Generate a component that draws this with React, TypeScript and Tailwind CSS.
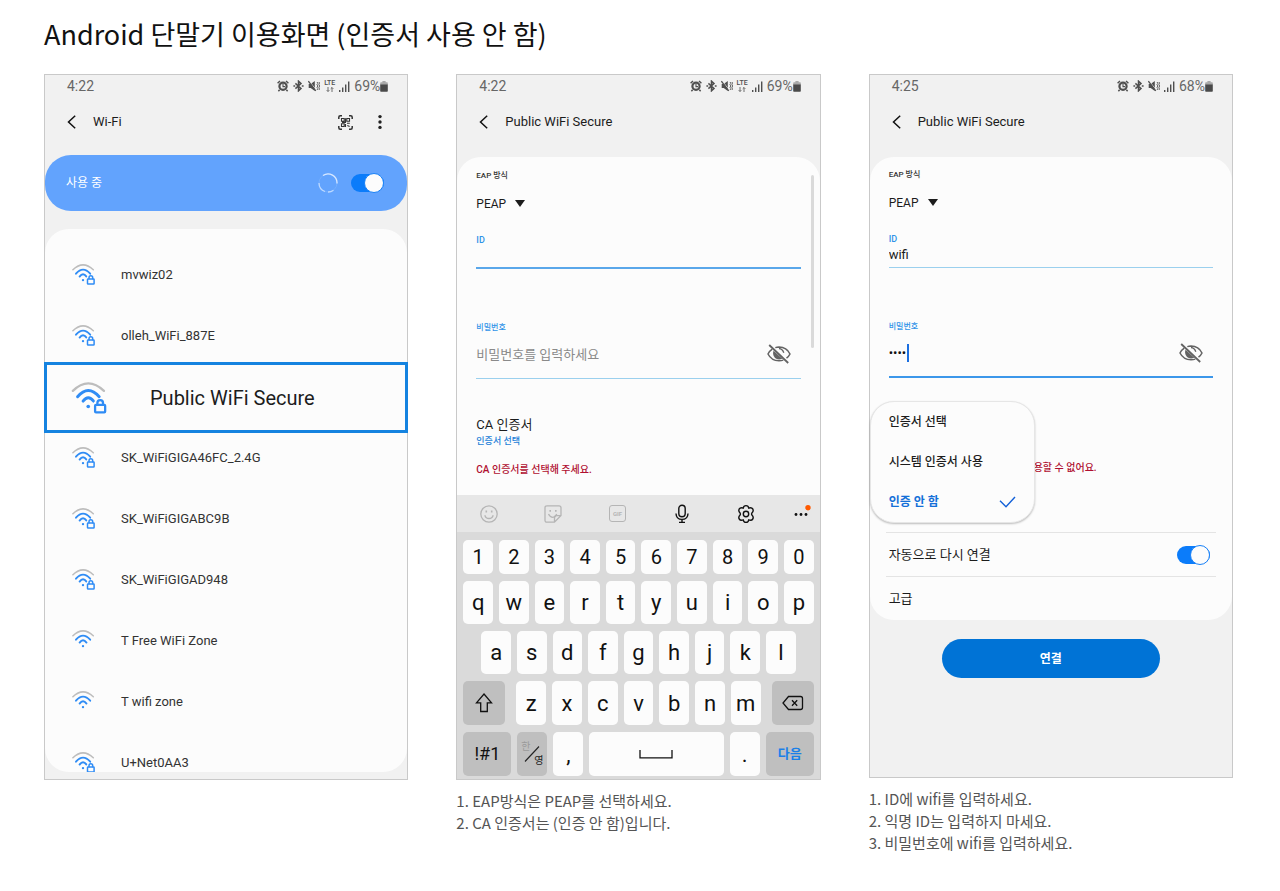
import { ReactNode } from "react";
import clsx from "clsx";

const networks = [
    { name: "mvwiz02", locked: true },
    { name: "olleh_WiFi_887E", locked: true },
    { name: "Public WiFi Secure", locked: true, highlighted: true },
    { name: "SK_WiFiGIGA46FC_2.4G", locked: true },
    { name: "SK_WiFiGIGABC9B", locked: true },
    { name: "SK_WiFiGIGAD948", locked: true },
    { name: "T Free WiFi Zone", locked: false },
    { name: "T wifi zone", locked: false },
];

function WifiIcon({ locked, className }: { locked: boolean; className: string }) {
    return (
        <svg viewBox="0 0 23 21" fill="none" strokeLinecap="round" className={className} aria-hidden="true">
            <path d="M.9 5.8Q11 -4 21.3 5.8" stroke="#bdbdbd" strokeWidth="1.5" />
            <path d="M4 9.7Q11 1.5 18.2 9.7" stroke="#2f8cf5" strokeWidth="1.9" />
            <path d="M7.6 12.6Q11 8 14.5 12.6" stroke="#2f8cf5" strokeWidth="1.9" />
            <circle cx="11" cy="16.1" r="1.2" fill="#2f8cf5" />
            {locked && (
                <>
                    <path d="M14.4 20.6v-6.2q.8-3 4.400-3.400 3.400.4 4 3.400v6.200z" fill="#fcfcfc" />
                    <rect x="15.500" y="15" width="6.600" height="5" rx=".6" stroke="#2f8cf5" strokeWidth="1.500" />
                    <path d="M17 14.800v-1.100a1.850 1.850 0 0 1 3.700 0v1.100" stroke="#2f8cf5" strokeWidth="1.500" />
                </>
            )}
        </svg>
    );
}

function AlarmIcon() {
    return (
        <svg viewBox="0 0 12 12" fill="none" stroke="currentColor" className="h-3 w-3" aria-hidden="true">
            <circle cx="6" cy="6.3" r="3.6" strokeWidth="2.2" />
            <path d="M6 4v2.600h2" strokeWidth="1.100" />
            <path d="M.6 3.2 3 1M11.4 3.2 9 1M2.6 9.8l-1.200 1.400M9.400 9.800l1.200 1.400" strokeWidth="1.500" />
        </svg>
    );
}

function BluetoothIcon() {
    return (
        <svg viewBox="0 0 11 12" fill="none" stroke="currentColor" strokeWidth="1.500" className="h-3 w-[11px]" aria-hidden="true">
            <path d="m2.400 3.400 5.600 5-2.500 2.400V1.200L8 3.600l-5.600 5" />
            <path d="M.4 6h1.800M8.800 6h1.800" strokeWidth="1.600" />
        </svg>
    );
}

function MuteVibrateIcon() {
    return (
        <svg viewBox="0 0 12 12" className="h-3 w-3" fill="none" stroke="currentColor" aria-hidden="true">
            <path d="M.7 4h2L6.800 1v10L2.700 8h-2z" fill="currentColor" stroke="none" />
            <path d="m1.400 1.200 6.600 8.600" stroke="#f1f1f1" strokeWidth=".9" />
            <path d="m.4 1.200 7.400 9.600" strokeWidth="1.200" />
            <path d="m9 2 .9 1.300L9 4.600 9.900 6 9 7.300l.9 1.300L9 10M10.900 2l.8 1.300-.8 1.300.8 1.400-.8 1.300.8 1.300-.8 1.400" strokeWidth=".9" />
        </svg>
    );
}

function SignalIcon() {
    return (
        <svg viewBox="0 0 11 11" fill="currentColor" className="h-[11px] w-[11px]" aria-hidden="true">
            <path d="M0 9h1.400v2H0zM3 6.500h1.400V11H3zM6 3.400h1.400V11H6zM9 .6h1.400V11H9z" />
        </svg>
    );
}

function BatteryIcon() {
    return (
        <svg viewBox="0 0 8 11" className="h-[11px] w-2" aria-hidden="true">
            <path d="M2.400 0h3.200v1.300H7q.8 0 .8.8V4H.2V2.100q0-.8.8-.8h1.400z" fill="#a9a9a9" />
            <path d="M.2 3.600h7.600v6.300q0 .8-.8.8H1q-.8 0-.8-.8z" fill="#4a4a4a" />
        </svg>
    );
}

function StatusBar({ time, battery, lte }: { time: string; battery: string; lte?: boolean }) {
    return (
        <div className="flex h-6 items-center justify-between pr-[19px] pb-[2px] pl-[22px] text-sm text-[#666]">
            <span>{time}</span>
            <div className="flex items-center gap-1 text-[#4f4f4f]">
                <AlarmIcon />
                <BluetoothIcon />
                <MuteVibrateIcon />
                {lte && (
                    <span className="flex flex-col items-center text-[7px] leading-[7px] font-medium">
                        LTE
                        <svg viewBox="0 0 8 5" className="h-[5px] w-2" stroke="currentColor" strokeWidth=".8" fill="none" aria-hidden="true">
                            <path d="M2 0v4.400M.7 3.200 2 4.500l1.300-1.300M6 5V.6M4.700 1.800 6 .5l1.300 1.300" />
                        </svg>
                    </span>
                )}
                <SignalIcon />
                <span className="flex items-center text-[#666]">
                    {battery}
                    <BatteryIcon />
                </span>
            </div>
        </div>
    );
}

function PhoneHeader({ title, children }: { title: string; children?: ReactNode }) {
    return (
        <header className="flex h-[46px] items-center pr-[22px] pl-[22px]">
            <button type="button" aria-label="뒤로" className="mr-[17px] flex">
                <svg viewBox="0 0 9 14" fill="none" stroke="#111" strokeWidth="1.500" className="h-[14px] w-[9px]">
                    <path d="M8.200.8 1.500 7l6.700 6.200" />
                </svg>
            </button>
            <h2 className="flex-1 text-[13px] text-[#1c1c1c]">{title}</h2>
            {children}
        </header>
    );
}

function Phone({ children }: { children: ReactNode }) {
    return (
        <div className="border border-[#c9c9c9] bg-[#f1f1f1] font-['Roboto','Noto_Sans_CJK_KR',sans-serif]">
            {children}
        </div>
    );
}

function Toggle({ id }: { id: string }) {
    return (
        <input
            id={id}
            type="checkbox"
            role="switch"
            defaultChecked
            className="flex h-[18px] w-[33px] shrink-0 appearance-none items-center justify-end rounded-full bg-[#0b7cfa] before:h-5 before:w-5 before:shrink-0 before:rounded-full before:border before:border-[#1a82f7] before:bg-[#fcfcfc] before:content-['']"
        />
    );
}

function EapSelect({ id }: { id: string }) {
    return (
        <>
            <label htmlFor={id} className="block text-[8px] leading-3 font-medium text-[#333]">
                EAP 방식
            </label>
            <div className="relative mt-3 w-[49px]">
                <select id={id} className="block h-5 w-full appearance-none bg-transparent text-xs text-[#1c1c1c]">
                    <option>PEAP</option>
                </select>
                <svg viewBox="0 0 10 7" className="pointer-events-none absolute top-[6px] right-0 h-[7px] w-[10px]" fill="#1c1c1c" aria-hidden="true">
                    <path d="M0 0h10L5 7z" />
                </svg>
            </div>
        </>
    );
}

function EyeOffButton() {
    return (
        <button type="button" aria-label="비밀번호 표시" className="mr-[10px] ml-auto flex">
            <svg viewBox="0 0 24 20" fill="none" stroke="#636363" className="h-5 w-6">
                <path d="M5.200 5.200Q2.200 7.300 1 10q3.300 6.600 11 6.800 2.400 0 4.300-.7" strokeWidth="1.500" />
                <path d="M8.300 3.600Q10 3.100 12 3.100q7.800.2 11 6.900-1.200 2.500-3.500 4.200" strokeWidth="1.500" />
                <path d="M6.600 6.700q-.7 1.500-.5 3.400Q7 15.400 12 15.500q1.700 0 3.300-.7z" fill="#636363" stroke="none" />
                <path d="M12 4.500q3.500.4 4.800 4.200" strokeWidth="1.300" />
                <path d="m2.200 1 19 18" strokeWidth="1.800" />
            </svg>
        </button>
    );
}

function WifiListPhone() {
    return (
        <Phone>
            <StatusBar time="4:22" battery="69%" lte />
            <PhoneHeader title="Wi-Fi">
                <button type="button" aria-label="QR 코드 스캔" className="flex">
                    <svg viewBox="0 0 15 15" fill="none" stroke="#333" className="h-[15px] w-[15px]">
                        <path d="M.8 4V2.300Q.8.8 2.300.8H4M11 .8h1.700q1.500 0 1.500 1.500V4M14.200 11v1.700q0 1.500-1.500 1.500H11M4 14.200H2.300q-1.500 0-1.500-1.500V11" strokeWidth="1.500" />
                        <path d="M3.500 3.500h2.700v2.700H3.500zM8.800 3.500h2.700v2.700H8.800zM3.500 8.800h2.700v2.700H3.500zM7.500 3.200v4.200H4M7.500 9v3M9 8.200h2.800M9.300 10.500l2.300 1" strokeWidth="1.100" />
                    </svg>
                </button>
                <button type="button" aria-label="더보기" className="ml-[22px] flex">
                    <svg viewBox="0 0 10 16" fill="#222" className="h-4 w-[10px]">
                        <circle cx="5" cy="2.600" r="1.700" />
                        <circle cx="5" cy="8" r="1.700" />
                        <circle cx="5" cy="13.400" r="1.700" />
                    </svg>
                </button>
            </PhoneHeader>
            <div className="mt-[10px] flex h-14 items-center rounded-[26px] bg-[#62a3fd] pr-[23px] pl-[21px]">
                <label htmlFor="wifi-on" className="flex-1 text-xs text-white">
                    사용 중
                </label>
                <svg viewBox="0 0 20 20" fill="none" className="mr-[13px] h-5 w-5" aria-hidden="true">
                    <circle cx="10" cy="10" r="9" stroke="#73aefd" strokeWidth="1" />
                    <path d="M5 2.500A9 9 0 0 1 19 10.500" stroke="#d8e8ff" strokeWidth="1.300" />
                    <path d="M15.500 17.200A9 9 0 0 1 10 19M7 18.500A9 9 0 0 1 1 10" stroke="#bdd9ff" strokeWidth="1.300" />
                </svg>
                <Toggle id="wifi-on" />
            </div>
            <ul className="mt-[18px] mb-[7px] rounded-[24px] bg-[#fcfcfc] pt-[15px]">
                {networks.map((network) => (
                    <li
                        key={network.name}
                        className={clsx(
                            network.highlighted
                                ? "relative -mx-px -mt-1 -mb-[6px] h-[71px] border-3 border-[#1583e0] bg-[#fcfcfc]"
                                : "h-[61px]"
                        )}
                    >
                        <button
                            type="button"
                            className={clsx(
                                "flex h-full w-full items-center text-left",
                                network.highlighted
                                    ? "gap-[43px] pl-6 text-xl text-[#1c1c1c]"
                                    : "gap-[26px] pl-[27px] text-[13px] text-[#333]"
                            )}
                        >
                            <WifiIcon
                                locked={network.locked}
                                className={network.highlighted ? "h-8 w-9" : "h-[21px] w-[23px]"}
                            />
                            {network.name}
                        </button>
                    </li>
                ))}
                {/* last row is cut off by the bottom of the list */}
                <li className="h-10 overflow-hidden">
                    <button type="button" className="flex h-[61px] w-full items-center gap-[26px] pl-[27px] text-left text-[13px] text-[#333]">
                        <WifiIcon locked className="h-[21px] w-[23px]" />
                        U+Net0AA3
                    </button>
                </li>
            </ul>
        </Phone>
    );
}

function Key({ children, dark, label, className }: { children: ReactNode; dark?: boolean; label?: string; className?: string }) {
    return (
        <button
            type="button"
            aria-label={label}
            className={clsx(
                "flex items-center justify-center rounded-[5px] text-[#111]",
                dark ? "bg-[#bfbfbf]" : "bg-[#fcfcfc]",
                className
            )}
        >
            {children}
        </button>
    );
}

function KeyRow({ keys, className }: { keys: string; className: string }) {
    return (
        <div className={clsx("grid auto-cols-fr grid-flow-col gap-[6px]", className)}>
            {keys.split("").map((key) => (
                <Key key={key}>{key}</Key>
            ))}
        </div>
    );
}

function Keyboard() {
    return (
        <div className="bg-[#dadada]">
            <div className="grid h-[37px] grid-cols-[repeat(5,1fr)_42px] items-center justify-items-center bg-[#e7e7e7] text-[#b5b5b5]">
                <button type="button" aria-label="이모티콘">
                    <svg viewBox="0 0 18 18" fill="none" stroke="currentColor" strokeWidth="1.300" className="h-[18px] w-[18px]">
                        <circle cx="9" cy="9" r="8.200" />
                        <path d="M4.800 10.200q1 3.300 4.200 3.300t4.200-3.300" />
                        <path d="M6.300 5.500v2M11.700 5.500v2" strokeWidth="1.600" />
                    </svg>
                </button>
                <button type="button" aria-label="스티커">
                    <svg viewBox="0 0 18 18" fill="none" stroke="currentColor" strokeWidth="1.300" className="h-[18px] w-[18px]">
                        <path d="M3 .8h12q2 0 2 2v7.700l-6.500 6.700H3q-2 0-2-2V2.800q0-2 2-2zM10.500 17v-4q0-2.200 2.200-2.300H17" />
                        <path d="M4.500 9q1.500 3.300 4.500 3.300 2-.2 3.800-3.100" />
                        <path d="M6.200 5v1.800M11.800 5v1.800" strokeWidth="1.600" />
                    </svg>
                </button>
                <button type="button" aria-label="GIF" className="flex h-[17px] w-[17px] items-center justify-center rounded-[3px] border border-[#b5b5b5] text-[6px] leading-none font-bold">
                    GIF
                </button>
                <button type="button" aria-label="음성 입력">
                    <svg viewBox="0 0 16 20" fill="none" stroke="#111" strokeWidth="1.400" className="h-5 w-4">
                        <rect x="4.800" y="1.200" width="6.400" height="11.600" rx="3.200" />
                        <path d="M2 9.500q.2 5.900 6 5.900t6-5.900M8 15.400v3M5 18.400h6" />
                    </svg>
                </button>
                <button type="button" aria-label="설정">
                    <svg viewBox="0 0 20 20" fill="none" stroke="#111" strokeWidth="1.400" className="h-5 w-5">
                        <path d="M10 1.600c2 0 2.500.7 2.800 2.500 1.800-.6 2.900-.8 4 .9 1 1.800.5 2.600-.9 4q-.6 1 0 2c1.400 1.400 1.900 2.200.9 4-1.100 1.700-2.200 1.500-4 .9-.3 1.800-.8 2.500-2.800 2.500s-2.500-.7-2.800-2.500c-1.800.6-2.900.8-4-.9-1-1.800-.5-2.600.9-4q.6-1 0-2c-1.400-1.400-1.900-2.200-.9-4 1.100-1.700 2.200-1.500 4-.9.3-1.800.8-2.500 2.800-2.500z" />
                        <circle cx="10" cy="10" r="2.700" />
                    </svg>
                </button>
                <button type="button" aria-label="더보기" className="justify-self-end pr-2">
                    <svg viewBox="0 0 18 18" fill="#111" className="h-[18px] w-[18px]">
                        <circle cx="2" cy="9.500" r="1.400" />
                        <circle cx="7" cy="9.500" r="1.400" />
                        <circle cx="12" cy="9.500" r="1.400" />
                        <circle cx="14" cy="2.700" r="2.700" fill="#ff5a00" />
                    </svg>
                </button>
            </div>
            <div className="flex flex-col gap-[7px] px-[6px] pt-2 pb-[3px] text-[22px]">
                <KeyRow keys="1234567890" className="h-[34px] text-xl" />
                <KeyRow keys="qwertyuiop" className="h-[43px]" />
                <KeyRow keys="asdfghjkl" className="h-[43px] px-[18px]" />
                <div className="grid h-11 grid-cols-[42px_1fr_42px] gap-x-[11px]">
                    <Key dark label="Shift">
                        <svg viewBox="0 0 18 20" fill="none" stroke="#111" strokeWidth="1.300" className="h-5 w-[18px]">
                            <path d="m9 1 7.500 8.800h-4.200v8.700H5.700V9.800H1.500z" />
                        </svg>
                    </Key>
                    <KeyRow keys="zxcvbnm" className="h-11" />
                    <Key dark label="지우기">
                        <svg viewBox="0 0 22 16" fill="none" stroke="#111" strokeWidth="1.300" className="h-4 w-[22px]">
                            <path d="M6.500 1.500h12q2 0 2 2v9q0 2-2 2h-12L1 8z" />
                            <path d="m10 5.300 5.200 5.400M15.200 5.300 10 10.700" />
                        </svg>
                    </Key>
                </div>
                <div className="grid h-11 grid-cols-[48px_30px_30px_1fr_30px_48px] gap-x-[6px]">
                    <Key dark className="text-lg">!#1</Key>
                    <Key dark label="한/영">
                        <span className="grid grid-cols-2 gap-x-1 text-[10px] leading-[14px]">
                            <span className="col-start-1 row-start-1 text-[#9a9a9a]">한</span>
                            <svg viewBox="0 0 16 18" fill="none" stroke="#222" className="col-start-1 col-end-3 row-start-1 row-end-3 h-[18px] w-4 place-self-center" aria-hidden="true">
                                <path d="M15 1.500 1 16.500" strokeWidth="1.100" />
                            </svg>
                            <span className="col-start-2 row-start-2 text-[#222]">영</span>
                        </span>
                    </Key>
                    <Key>,</Key>
                    <Key label="스페이스">
                        <svg viewBox="0 0 34 9" fill="none" stroke="#111" strokeWidth="1.300" className="h-[9px] w-[34px]">
                            <path d="M1 0v7.800h32V0" />
                        </svg>
                    </Key>
                    <Key>.</Key>
                    <Key dark className="text-[13px] font-bold">
                        <span className="text-[#1b7fe8]">다음</span>
                    </Key>
                </div>
            </div>
        </div>
    );
}

function KeyboardPhone() {
    return (
        <Phone>
            <StatusBar time="4:22" battery="69%" lte />
            <PhoneHeader title="Public WiFi Secure" />
            <form className="relative mt-3 rounded-t-[24px] bg-[#fcfcfc] px-[19px] pt-[13px] pb-[17px]">
                <div className="absolute top-[18px] right-[6px] h-[173px] w-[3px] rounded-full bg-[#dadada]" />
                <EapSelect id="eap-1" />
                <label htmlFor="id-1" className="mt-5 block text-[9px] leading-3 font-medium text-[#2f93e8]">
                    ID
                </label>
                <input id="id-1" type="text" className="block h-[23px] w-full border-b-2 border-[#5aa7ea] bg-transparent pb-1 text-[13px] outline-none" />
                <label htmlFor="pw-1" className="mt-[53px] block text-[8px] leading-3 font-medium text-[#2f93e8]">
                    비밀번호
                </label>
                <div className="flex h-[45px] items-center border-b border-[#9bd0ee] pb-1">
                    <input
                        id="pw-1"
                        type="password"
                        placeholder="비밀번호를 입력하세요"
                        className="h-5 min-w-0 flex-1 bg-transparent text-[13px] outline-none placeholder:text-[#8a8a8a]"
                    />
                    <EyeOffButton />
                </div>
                <p className="mt-9 text-[13px] leading-5 text-[#1c1c1c]">CA 인증서</p>
                <button type="button" className="block text-[9px] leading-3 font-medium text-[#1b7fd8]">
                    인증서 선택
                </button>
                <p className="mt-[15px] text-[10px] leading-4 font-medium text-[#b00f30]">CA 인증서를 선택해 주세요.</p>
            </form>
            <Keyboard />
        </Phone>
    );
}

function CertificatePhone() {
    return (
        <Phone>
            <StatusBar time="4:25" battery="68%" />
            <PhoneHeader title="Public WiFi Secure" />
            <form className="pb-[99px]">
                <div className="mt-3 rounded-[24px] bg-[#fcfcfc] pt-3">
                    <div className="px-[19px]">
                        <EapSelect id="eap-2" />
                        <label htmlFor="id-2" className="mt-5 block text-[9px] leading-3 font-medium text-[#2f93e8]">
                            ID
                        </label>
                        <input
                            id="id-2"
                            type="text"
                            defaultValue="wifi"
                            className="block h-[23px] w-full border-b border-[#9bd0ee] bg-transparent pb-1 text-[13px] text-[#1c1c1c] outline-none"
                        />
                        <label htmlFor="pw-2" className="mt-[53px] block text-[8px] leading-3 font-medium text-[#2f93e8]">
                            비밀번호
                        </label>
                        <div className="flex h-[45px] items-center border-b-2 border-[#3c97ea] pb-1">
                            <input
                                id="pw-2"
                                type="password"
                                defaultValue="wifi"
                                className="h-5 w-[18px] bg-transparent text-[13px] text-[#111] outline-none"
                            />
                            <span className="h-[18px] w-[2px] bg-[#1b6fe0]" />
                            <EyeOffButton />
                        </div>
                    </div>
                    <div className="relative pt-[82px] pb-14">
                        <p className="pl-[164px] text-[10px] leading-4 font-medium text-[#b00f30]">용할 수 없어요.</p>
                        <div
                            role="listbox"
                            aria-label="CA 인증서"
                            className="absolute top-[23px] left-0 w-[165px] rounded-[24px] border border-[#e6e6e6] bg-[#fcfcfc] text-xs font-medium text-[#1c1c1c] shadow-[0_1px_2px_rgba(0,0,0,0.25)]"
                        >
                            <button type="button" role="option" aria-selected="false" className="flex h-10 w-full items-center px-[18px]">
                                인증서 선택
                            </button>
                            <button type="button" role="option" aria-selected="false" className="flex h-10 w-full items-center px-[18px]">
                                시스템 인증서 사용
                            </button>
                            <button type="button" role="option" aria-selected="true" className="flex h-10 w-full items-center justify-between px-[18px] font-bold text-[#1470d8]">
                                인증 안 함
                                <svg viewBox="0 0 17 12" fill="none" stroke="#1260d8" strokeWidth="1.400" className="h-3 w-[17px]" aria-hidden="true">
                                    <path d="m1 4.800 6 6L16 1" />
                                </svg>
                            </button>
                        </div>
                    </div>
                    <div className="mx-4 flex h-11 items-center justify-between border-t border-[#e4e4e4] pr-[6px] pl-[3px]">
                        <label htmlFor="reconnect" className="text-[13px] text-[#1c1c1c]">
                            자동으로 다시 연결
                        </label>
                        <Toggle id="reconnect" />
                    </div>
                    <div className="mx-4 border-t border-[#e4e4e4] pl-[3px]">
                        <button type="button" className="flex h-[43px] w-full items-center text-[13px] text-[#1c1c1c]">
                            고급
                        </button>
                    </div>
                </div>
                <button type="button" className="mx-auto mt-[19px] block h-[39px] w-3/5 rounded-full bg-[#0073d6] text-xs font-bold text-white">
                    연결
                </button>
            </form>
        </Phone>
    );
}

function Caption({ lines }: { lines: string[] }) {
    return (
        <div className="mt-[10px] text-[15px] leading-[22px] text-[#555]">
            {lines.map((line) => (
                <p key={line}>{line}</p>
            ))}
        </div>
    );
}

export default function App() {
    return (
        <main className="min-h-screen bg-white pt-4 pr-[47px] pb-9 pl-11 font-['Noto_Sans_CJK_KR',sans-serif]">
            <h1 className="text-[27px] leading-9 text-[#111]">Android 단말기 이용화면 (인증서 사용 안 함)</h1>
            <div className="mt-[22px] grid grid-cols-3 items-start gap-12">
                <section>
                    <WifiListPhone />
                </section>
                <section>
                    <KeyboardPhone />
                    <Caption lines={["1. EAP방식은 PEAP를 선택하세요.", "2. CA 인증서는 (인증 안 함)입니다."]} />
                </section>
                <section>
                    <CertificatePhone />
                    <Caption lines={["1. ID에 wifi를 입력하세요.", "2. 익명 ID는 입력하지 마세요.", "3. 비밀번호에 wifi를 입력하세요."]} />
                </section>
            </div>
        </main>
    );
}
